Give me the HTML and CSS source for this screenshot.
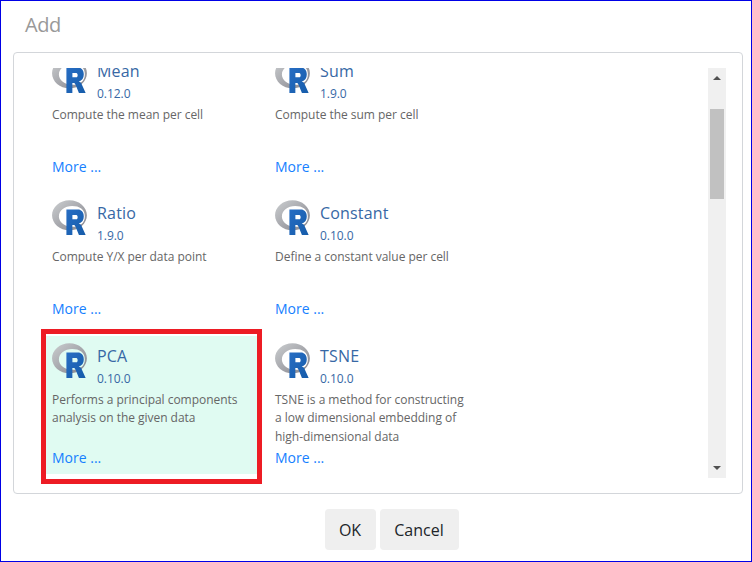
FILE: index.html
```html
<!DOCTYPE html>
<html lang="en">
<head>
<meta charset="utf-8">
<title>Add</title>
<link rel="stylesheet" href="styles.css">
</head>
<body>
<svg class="defs" width="0" height="0" aria-hidden="true">
  <defs>
    <linearGradient id="ring" x1="0" y1="0" x2="1" y2="1"><stop offset="0" stop-color="#cbced0"/><stop offset="1" stop-color="#84838b"/></linearGradient>
    <linearGradient id="blue" x1="0" y1="0" x2="1" y2="1"><stop offset="0" stop-color="#276dc3"/><stop offset="1" stop-color="#165caa"/></linearGradient>
  </defs>
  <symbol id="r-logo" viewBox="0 0 724 561" preserveAspectRatio="none">
    <path fill="url(#ring)" fill-rule="evenodd" d="M361.5 486C162.300 486 .9 377.800 .9 244.500S162.300 3 361.500 3 722 111.100 722 244.500 560.600 486 361.500 486ZM416.600 97.400C265.300 97.400 142.600 171.300 142.600 262.500S265.300 427.600 416.600 427.600 679.700 377 679.700 262.500 568 97.400 416.600 97.400Z"/>
    <path fill="url(#blue)" fill-rule="evenodd" d="M550 377S571.800 383.600 584.500 390C588.900 392.200 596.500 396.700 602 402.500 607.400 408.200 610 414 610 414L696 559H557L492 437S478.700 414.100 470.500 407.500C463.700 402 460.800 400 454 400H421V559H298V153H545S657.500 155 657.500 262 550 377 550 377ZM496.500 241H422V310H496.500S531 309.900 531 274.900 496.500 241 496.500 241Z"/>
  </symbol>
</svg>
<main class="dialog">
  <h1 class="title">Add</h1>
  <section class="panel">
    <div class="viewport">
      <div class="cards">
        <article class="card">
          <header class="head"><svg class="logo"><use href="#r-logo"/></svg><div><h2 class="name">Mean</h2><p class="version">0.12.0</p></div></header>
          <p class="desc">Compute the mean per cell</p><a class="more">More ...</a>
        </article>
        <article class="card">
          <header class="head"><svg class="logo"><use href="#r-logo"/></svg><div><h2 class="name">Sum</h2><p class="version">1.9.0</p></div></header>
          <p class="desc">Compute the sum per cell</p><a class="more">More ...</a>
        </article>
        <article class="card">
          <header class="head"><svg class="logo"><use href="#r-logo"/></svg><div><h2 class="name">Ratio</h2><p class="version">1.9.0</p></div></header>
          <p class="desc">Compute Y/X per data point</p><a class="more">More ...</a>
        </article>
        <article class="card">
          <header class="head"><svg class="logo"><use href="#r-logo"/></svg><div><h2 class="name">Constant</h2><p class="version">0.10.0</p></div></header>
          <p class="desc">Define a constant value per cell</p><a class="more">More ...</a>
        </article>
        <article class="card selected">
          <header class="head"><svg class="logo"><use href="#r-logo"/></svg><div><h2 class="name">PCA</h2><p class="version">0.10.0</p></div></header>
          <p class="desc">Performs a principal components<br>analysis on the given data</p><a class="more">More ...</a>
        </article>
        <article class="card">
          <header class="head"><svg class="logo"><use href="#r-logo"/></svg><div><h2 class="name">TSNE</h2><p class="version">0.10.0</p></div></header>
          <p class="desc">TSNE is a method for constructing<br>a low dimensional embedding of<br>high-dimensional data</p><a class="more">More ...</a>
        </article>
      </div>
      <div class="scrollbar">
        <svg class="arrow" viewBox="0 0 8 4"><path d="M0 4L4 0L8 4Z"/></svg>
        <div class="track"><div class="thumb"></div></div>
        <svg class="arrow" viewBox="0 0 8 4"><path d="M0 0L4 4L8 0Z"/></svg>
      </div>
    </div>
    <div class="highlight"></div>
  </section>
  <footer class="actions"><button class="btn ok">OK</button><button class="btn cancel">Cancel</button></footer>
</main>
</body>
</html>
```
FILE: styles.css
```css
* { box-sizing: border-box; margin: 0; padding: 0; }
body { font-family: "Open Sans", "Noto Sans", sans-serif; background: #fff; }
.defs { position: absolute; }
.dialog { width: 752px; height: 562px; border: 1px solid #0000e6; padding: 0 9px 0 12px; overflow: hidden; }
.title { height: 51px; padding: 10px 0 0 12px; font-size: 20px; line-height: 28px; font-weight: 400; color: #999; letter-spacing: -.5px; }
.panel { position: relative; width: 730px; height: 442px; border: 1px solid #d3d6da; border-radius: 4px; padding: 15px 16px 15px 32px; }
.viewport { height: 410px; display: flex; justify-content: space-between; overflow: hidden; }
.cards { display: grid; grid-template-columns: 211px 211px; grid-template-rows: 132px 132px 138px; column-gap: 12px; row-gap: 10.700px; margin-top: -17.500px; }
.card { padding: 7px 6px 6px; display: flex; flex-direction: column; }
.selected { background: #e0fbf2; }
.head { display: flex; gap: 10px; height: 48px; flex: none; }
.logo { width: 35px; height: 35px; flex: none; }
.name { font-size: 16px; line-height: 24px; font-weight: 400; color: #3768a5; padding-top: 1px; letter-spacing: .18px; }
.version { font-size: 12px; line-height: 22px; color: #3768a5; letter-spacing: -.05px; }
.desc { font-size: 12px; line-height: 18.500px; color: #666; letter-spacing: -.03px; white-space: nowrap; }
.more { display: block; margin-top: auto; font-size: 14px; line-height: 20px; color: #1680ff; }
.scrollbar { width: 18px; height: 410px; background: #f0f0f0; display: flex; flex-direction: column; align-items: center; justify-content: space-between; padding: 8px 0; }
.arrow { width: 8px; height: 4px; fill: #505050; }
.track { height: 328px; }
.thumb { width: 14px; height: 90px; background: #c1c1c1; }
.highlight { position: absolute; left: 27px; top: 276px; width: 221px; height: 155px; border: 5px solid #ed1c24; }
.actions { display: flex; justify-content: center; gap: 4px; padding: 15px 0 0 28px; }
.btn { height: 41px; border: 0; border-radius: 4px; background: #efefef; color: #212529; font: 16px "Open Sans", "Noto Sans", sans-serif; letter-spacing: 0; }
.ok { width: 51px; }
.cancel { width: 79px; }
```
